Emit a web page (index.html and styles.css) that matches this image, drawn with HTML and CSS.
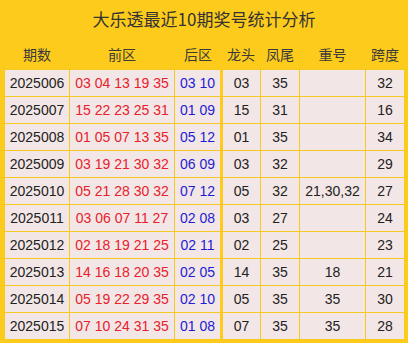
FILE: index.html
```html
<!DOCTYPE html>
<html>
<head>
<meta charset="utf-8">
<link rel="stylesheet" href="styles.css">
</head>
<body>
<div class="panel">
  <div class="title">大乐透最近10期奖号统计分析</div>
  <table class="stats">
    <colgroup>
      <col class="c1"><col class="c2"><col class="c3"><col class="c4"><col class="c5"><col class="c6"><col class="c7">
    </colgroup>
    <thead>
      <tr><th>期数</th><th>前区</th><th>后区</th><th class="div">龙头</th><th>凤尾</th><th>重号</th><th>跨度</th></tr>
    </thead>
    <tbody>
      <tr><td>2025006</td><td class="red">03 04 13 19 35</td><td class="blue">03 10</td><td class="div">03</td><td>35</td><td></td><td>32</td></tr>
      <tr><td>2025007</td><td class="red">15 22 23 25 31</td><td class="blue">01 09</td><td class="div">15</td><td>31</td><td></td><td>16</td></tr>
      <tr><td>2025008</td><td class="red">01 05 07 13 35</td><td class="blue">05 12</td><td class="div">01</td><td>35</td><td></td><td>34</td></tr>
      <tr><td>2025009</td><td class="red">03 19 21 30 32</td><td class="blue">06 09</td><td class="div">03</td><td>32</td><td></td><td>29</td></tr>
      <tr><td>2025010</td><td class="red">05 21 28 30 32</td><td class="blue">07 12</td><td class="div">05</td><td>32</td><td>21,30,32</td><td>27</td></tr>
      <tr><td>2025011</td><td class="red">03 06 07 11 27</td><td class="blue">02 08</td><td class="div">03</td><td>27</td><td></td><td>24</td></tr>
      <tr><td>2025012</td><td class="red">02 18 19 21 25</td><td class="blue">02 11</td><td class="div">02</td><td>25</td><td></td><td>23</td></tr>
      <tr><td>2025013</td><td class="red">14 16 18 20 35</td><td class="blue">02 05</td><td class="div">14</td><td>35</td><td>18</td><td>21</td></tr>
      <tr><td>2025014</td><td class="red">05 19 22 29 35</td><td class="blue">02 10</td><td class="div">05</td><td>35</td><td>35</td><td>30</td></tr>
      <tr><td>2025015</td><td class="red">07 10 24 31 35</td><td class="blue">01 08</td><td class="div">07</td><td>35</td><td>35</td><td>28</td></tr>
    </tbody>
  </table>
</div>
</body>
</html>
```
FILE: styles.css
```css
html, body {
  margin: 0;
  padding: 0;
  background: #ffffff;
}
.panel {
  width: 408px;
  height: 343px;
  box-sizing: border-box;
  background: #fdcb1c;
  padding: 0 4px 4px 4px;
  font-family: "Liberation Sans", "Noto Sans CJK SC", sans-serif;
  color: #222222;
}
.title {
  height: 38px;
  line-height: 38px;
  text-align: center;
  font-size: 17px;
  color: #333333;
  font-family: "Noto Sans CJK SC", sans-serif;
}
.stats {
  width: 400px;
  border-collapse: collapse;
  table-layout: fixed;
}
.c1 { width: 65px; }
.c2 { width: 105px; }
.c3 { width: 47px; }
.c4 { width: 39px; }
.c5 { width: 39px; }
.c6 { width: 66px; }
.c7 { width: 39px; }
.stats th {
  height: 31px;
  padding: 0;
  font-weight: normal;
  font-size: 14px;
  color: #3a3a3a;
  font-family: "Noto Sans CJK SC", sans-serif;
  text-align: center;
  vertical-align: middle;
}
.stats td {
  height: 26px;
  padding: 0;
  background: #f3e6e6;
  border: 1px solid #f6c822;
  text-align: center;
  vertical-align: middle;
  font-size: 14px;
  white-space: nowrap;
}
.stats td.div {
  border-left: 3px solid #fdcb1c;
}
.stats td.red { color: #e8212b; }
.stats td.blue { color: #1d1dd6; }
```
